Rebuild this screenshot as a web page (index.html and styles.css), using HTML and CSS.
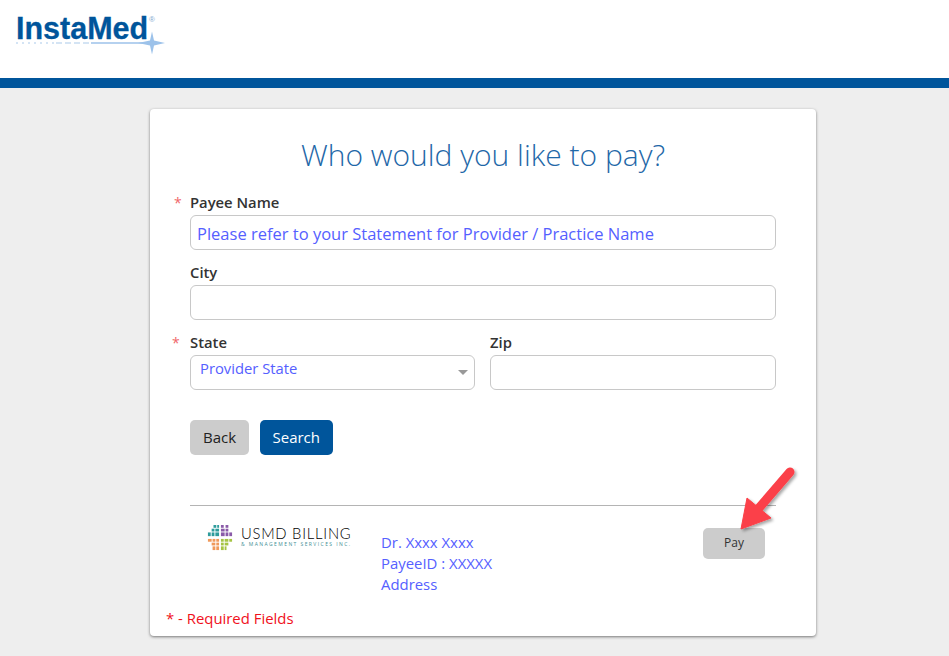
FILE: index.html
```html
<!DOCTYPE html>
<html>
<head>
  <meta name="viewport" content="width=device-width, initial-scale=1">
  <title>InstaMed</title>
  <link rel="stylesheet" href="styles.css">
</head>
<body>
  <header class="top">
    <div class="brand">
      <span class="brand-name">InstaMed</span><span class="brand-reg">&reg;</span>
      <svg class="brand-star" width="152" height="24" viewBox="0 0 152 24">
        <path d="M0 12H40" stroke="#a9c9ea" stroke-width="1" stroke-dasharray="2 4"/>
        <path d="M40 12H75" stroke="#a9c9ea" stroke-width="1.2" stroke-dasharray="6 3"/>
        <path d="M75 12H140" stroke="#9cc2ea" stroke-width="1.5"/>
        <path d="M136 0.5 L138 9.5 L149 12 L138 14.5 L136 23.5 L134 14.5 L122 12 L134 9.5Z" fill="#9cc2ea"/>
      </svg>
    </div>
  </header>
  <div class="bar"></div>

  <main class="card">
    <h1 class="title">Who would you like to pay?</h1>

    <div class="field req">
      <label>Payee Name</label>
      <input class="box" type="text" value="Please refer to your Statement for Provider / Practice Name">
    </div>
    <div class="field">
      <label>City</label>
      <input class="box" type="text">
    </div>
    <div class="row">
      <div class="field req">
        <label>State</label>
        <div class="box select">
          <span>Provider State</span>
          <i class="caret"></i>
        </div>
      </div>
      <div class="field">
        <label>Zip</label>
        <input class="box" type="text">
      </div>
    </div>

    <div class="actions">
      <button class="btn btn-grey">Back</button>
      <button class="btn btn-blue">Search</button>
    </div>

    <div class="result">
      <div class="usmd">
        <svg class="usmd-mark" width="26" height="26" viewBox="0 0 26 28">
          <g fill="#2e9c9c">
            <rect x="6" y="0" width="3" height="3"/><rect x="10" y="0" width="2" height="3"/>
            <rect x="4" y="4" width="3" height="3"/><rect x="8" y="4" width="4" height="3"/>
            <rect x="0" y="8" width="3" height="4"/><rect x="4" y="8" width="3" height="4"/><rect x="8" y="8" width="4" height="4"/>
          </g>
          <g fill="#8a5aa8">
            <rect x="14" y="0" width="3" height="3"/><rect x="19" y="0" width="3" height="3"/>
            <rect x="14" y="4" width="4" height="3"/><rect x="19" y="4" width="3" height="3"/>
            <rect x="14" y="8" width="4" height="4"/><rect x="19" y="8" width="3" height="4"/><rect x="23" y="8" width="3" height="4"/>
          </g>
          <g fill="#f0995a">
            <rect x="0" y="15" width="4" height="3"/><rect x="5" y="15" width="3" height="3"/><rect x="9" y="15" width="3" height="3"/>
            <rect x="4" y="19" width="4" height="3"/><rect x="9" y="19" width="3" height="3"/>
            <rect x="5" y="23" width="3" height="4"/><rect x="9" y="23" width="3" height="4"/>
          </g>
          <g fill="#a5c443">
            <rect x="14" y="15" width="3" height="3"/><rect x="18" y="15" width="4" height="3"/><rect x="23" y="15" width="3" height="3"/>
            <rect x="14" y="19" width="3" height="3"/><rect x="18" y="19" width="4" height="3"/>
            <rect x="14" y="23" width="3" height="4"/><rect x="18" y="23" width="2" height="4"/>
          </g>
        </svg>
        <div class="usmd-text">
          <div class="usmd-name">USMD BILLING</div>
          <div class="usmd-sub">&amp; MANAGEMENT SERVICES INC.</div>
        </div>
      </div>
      <div class="payee">
        <div>Dr. Xxxx Xxxx</div>
        <div>PayeeID : XXXXX</div>
        <div>Address</div>
      </div>
      <button class="btn-pay">Pay</button>
    </div>

    <p class="note">* - Required Fields</p>

    <svg class="arrow" width="70" height="76" viewBox="0 0 70 76">
      <defs>
        <filter id="arrowShadow" x="-20%" y="-20%" width="150%" height="150%">
          <feDropShadow dx="2" dy="2" stdDeviation="1.5" flood-color="#000" flood-opacity="0.35"/>
        </filter>
      </defs>
      <g filter="url(#arrowShadow)">
        <path d="M57 8 L26 44" stroke="#fb4048" stroke-width="9" stroke-linecap="round"/>
        <path d="M8 65 L14 34 L38 54Z" fill="#fb4048" stroke="#fb4048" stroke-width="1"/>
      </g>
    </svg>
  </main>
</body>
</html>
```

FILE: styles.css
```css
html { background-color: #eeeeee; }
body { margin: 0; padding-bottom: 20px; font-family: "Open Sans", sans-serif; color: #333; }

.top { background: #fff; height: 78px; }
.brand { position: relative; width: 170px; height: 78px; }
.brand-name { display: block; padding: 10px 0 0 16px; font-family: "Liberation Sans", Arial, sans-serif; font-weight: 700; font-size: 30.5px; line-height: 36px; color: #00559b; -webkit-text-stroke: .3px #00559b; }
.brand-reg { position: absolute; left: 149px; top: 15px; font-family: "Liberation Sans", Arial, sans-serif; font-size: 8px; color: #7fa8d0; }
.brand-star { position: absolute; left: 16px; top: 31px; }
.bar { height: 10px; background: #00559b; }

.card { position: relative; box-sizing: border-box; width: 666px; height: 527px; margin: 21px 0 0 150px; padding: 24px 40px 0 40px; background: #fff; border-radius: 4px; box-shadow: 0 1px 3px rgba(0,0,0,.5); }
.title { margin: 0 0 18px; font-size: 30px; font-weight: 300; line-height: 44px; text-align: center; color: #1f68a8; }

.field { position: relative; margin-bottom: 15px; }
.field label { display: block; height: 20px; font-size: 14.8px; font-weight: 600; line-height: 15px; color: #333; }
.req::before { content: "*"; position: absolute; left: -16px; top: 0; font-size: 14px; line-height: 15px; color: #f0666a; }
.row .req::before { left: -18px; }
.box { display: block; box-sizing: border-box; width: 100%; height: 35px; padding: 1px 6px 0; border: 1px solid #c8c8c8; border-radius: 6px; background: #fff; font-family: "Open Sans", sans-serif; font-size: 16.5px; color: #5560ff; }
.row { display: grid; grid-template-columns: 285px 286px; column-gap: 15px; }
.select { display: flex; justify-content: space-between; align-items: center; padding: 0 9px; font-size: 14.8px; line-height: 26px; }
.select span { margin-bottom: 9px; }
.caret { width: 0; height: 0; border-left: 5px solid transparent; border-right: 5px solid transparent; border-top: 5px solid #999; margin: 0 -3px 0 0; }

.actions { display: flex; gap: 11px; margin-top: 15px; }
.btn { height: 35px; border: 0; border-radius: 5px; font-family: "Open Sans", sans-serif; font-size: 15px; padding: 0 12.5px 2px; }
.btn-grey { width: 59px; background: #cccccc; color: #222; }
.btn-blue { background: #00559b; color: #fff; }

.result { display: flex; height: 102px; margin-top: 50px; border-top: 1px solid #b4b4b4; }
.usmd { display: flex; width: 174px; margin: 19px 0 0 17px; }
.usmd-mark { flex: none; margin-right: 8px; }
.usmd-name { font-family: "Lato", sans-serif; font-size: 14.8px; font-weight: 300; line-height: 16px; letter-spacing: .75px; color: #000; }
.usmd-sub { font-family: "Open Sans", sans-serif; font-size: 5px; line-height: 7px; letter-spacing: 1.42px; white-space: nowrap; color: #3f8f95; }
.payee { margin-top: 26px; font-size: 14.9px; line-height: 21px; color: #5560ff; }
.btn-pay { flex: none; width: 62px; height: 31px; margin: 22px 11px 0 auto; padding: 0 0 2px; border: 0; border-radius: 5px; background: #cccccc; font-family: "Open Sans", sans-serif; font-size: 12px; color: #333; }

.note { margin: 0 0 0 -24px; font-size: 14.9px; line-height: 20px; color: #f0101c; }
.arrow { position: absolute; left: 583px; top: 355px; }
```
